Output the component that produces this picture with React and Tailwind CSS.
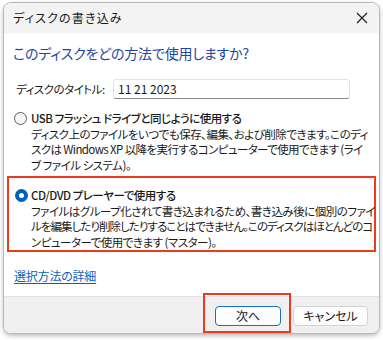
import React from "react";

const jp = {
  fontFamily: '"Noto Sans CJK JP", "Noto Sans", sans-serif',
  fontFeatureSettings: '"palt"',
};

function Radio({ checked }) {
  if (checked) {
    return (
      <span className="flex h-[13px] w-[13px] shrink-0 items-center justify-center rounded-full bg-[#005fb8]">
        <span className="h-[5px] w-[5px] rounded-full bg-white" />
      </span>
    );
  }
  return <span className="h-[13px] w-[13px] shrink-0 rounded-full border border-[#5c5c5c] bg-[#f7f7f7]" />;
}

export default function App() {
  return (
    <div className="h-[340px] w-[383px] bg-white pl-[3px] pt-[2px] text-[#1a1a1a]" style={jp}>
      <div className="flex h-[332px] w-[377px] flex-col overflow-hidden rounded-[8px] border border-[#b9b9b9] bg-white shadow-[0_2px_4px_rgba(0,0,0,0.25)]">
        {/* title bar */}
        <div className="flex h-[30px] shrink-0 items-center justify-between bg-[#f3f3f3] pl-[9px] pr-[10px]">
          <span className="text-[12px] leading-[16px] tracking-[1.2px]">ディスクの書き込み</span>
          <svg width="12" height="12" viewBox="0 0 12 12" className="mr-[1px]">
            <path d="M1 1L11 11M11 1L1 11" stroke="#1a1a1a" strokeWidth="1.1" />
          </svg>
        </div>

        {/* content */}
        <div className="flex min-h-0 flex-1 flex-col pt-[10px]">
          <div className="whitespace-nowrap pl-[9px] text-[14px] leading-[20px] tracking-[-0.2px] text-[#1e45a8]">
            このディスクをどの方法で使用しますか?
          </div>

          <div className="mt-[16px] flex items-center">
            <span className="w-[109px] whitespace-nowrap pl-[12px] text-[11.5px] leading-[16px] tracking-[-0.5px]">
              ディスクのタイトル:
            </span>
            <div className="flex h-[20px] w-[237px] items-center rounded-[3px] border border-[#e2e2e2] border-b-[#8a8a8a] bg-white pl-[4px] text-[12px]">
              11 21 2023
            </div>
          </div>

          {/* option 1 */}
          <div className="mt-[12px] pl-[10px] pr-[4px] text-[11.5px] leading-[15.5px] tracking-[-0.5px]">
            <div className="flex items-center gap-[4px]">
              <Radio />
              <span className="whitespace-nowrap font-medium">USB フラッシュ ドライブと同じように使用する</span>
            </div>
            <div className="pl-[17px]">
              <div className="whitespace-nowrap">ディスク上のファイルをいつでも保存、編集、および削除できます。このディ</div>
              <div className="whitespace-nowrap tracking-[-0.6px]">スクは Windows XP 以降を実行するコンピューターで使用できます (ライ</div>
              <div className="whitespace-nowrap">ブ ファイル システム)。</div>
            </div>
          </div>

          {/* option 2 */}
          <div className="ml-[3px] mr-[3px] mt-[3px] border-2 border-[#ee3a1c] pl-[6px] pt-[10px] text-[11.5px] leading-[15.5px] tracking-[-0.5px]">
            <div className="flex items-center gap-[3px]">
              <Radio checked />
              <span className="whitespace-nowrap font-medium">CD/DVD プレーヤーで使用する</span>
            </div>
            <div className="pl-[16px]">
              <div className="whitespace-nowrap">ファイルはグループ化されて書き込まれるため、書き込み後に個別のファイ</div>
              <div className="whitespace-nowrap tracking-[-0.95px]">ルを編集したり削除したりすることはできません。このディスクはほとんどのコ</div>
              <div className="whitespace-nowrap">ンピューターで使用できます (マスター)。</div>
            </div>
          </div>

          <div className="mt-[10px] pl-[10px]">
            <a className="text-[12px] leading-[16px] tracking-[-0.2px] text-[#0a5fc4] underline underline-offset-2">
              選択方法の詳細
            </a>
          </div>
        </div>

        {/* footer */}
        <div className="flex h-[37px] shrink-0 items-start justify-end gap-[2px] border-t border-[#e3e3e3] bg-[#f0f0f0] pr-[11px]">
          <div className="-mt-[4px] h-[40px] w-[88px] border-2 border-[#ee3a1c] pl-[10px] pt-[11px]">
            <button className="block h-[20px] w-[66px] rounded-[4px] border border-[#1a6fc7] bg-[#fdfdfd] text-[12px] leading-[16px]">
              次へ
            </button>
          </div>
          <button className="mt-[9px] h-[20px] w-[75px] rounded-[4px] border border-[#d3d3d3] bg-[#fdfdfd] text-[12px] leading-[16px]">
            キャンセル
          </button>
        </div>
      </div>
    </div>
  );
}
